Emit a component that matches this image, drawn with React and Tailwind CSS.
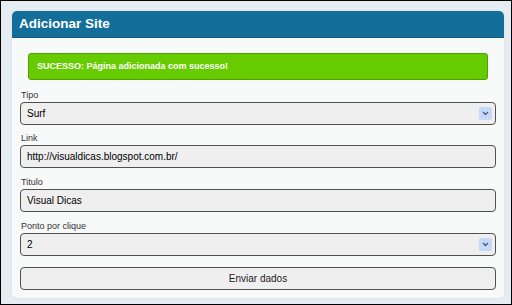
export default function App() {
  return (
    <div className="h-[305px] w-[512px] border border-black bg-[#e5ecf2] pl-[11px] pr-[7px] pt-[10px] font-['Liberation_Sans',Arial,sans-serif]">
      <div className="h-[287px] rounded-[5px] bg-[#f8f9f9] shadow-[0_0_0_1px_#dde6ee]">
        <div className="flex h-[27px] items-center rounded-t-[5px] border-b border-[#0e5f86] bg-[#136f99] px-[7px]">
          <h1 className="text-[13.5px] font-bold text-white">Adicionar Site</h1>
        </div>
        <div className="px-[8px] pt-[15px]">
          <div className="mx-[8px] flex h-[27px] items-center rounded-[3px] border border-[#4fa300] bg-[#66cc00] px-[8px] text-[9px] font-bold text-white">
            SUCESSO: Página adicionada com sucesso!
          </div>
          <Field label="Tipo" value="Surf" select className="mt-[9px]" />
          <Field label="Link" value="http://visualdicas.blogspot.com.br/" className="mt-[7px]" />
          <Field label="Titulo" value="Visual Dicas" className="mt-[8px]" />
          <Field label="Ponto por clique" value="2" select className="mt-[8px]" />
          <button className="mt-[11px] flex h-[23px] w-full items-center justify-center rounded-[4px] border-[1.5px] border-[#505050] bg-[#efefef] text-[10px] text-[#222]">
            Enviar dados
          </button>
        </div>
      </div>
    </div>
  )
}

function Field({ label, value, select, className }) {
  return (
    <div className={className}>
      <p className="pl-[1px] text-[9px] leading-[13px] text-[#333]">{label}</p>
      <div className="flex h-[23px] items-center rounded-[4px] border-[1.5px] border-[#505050] bg-[#efefef] pl-[6px] pr-[3px] text-[10px] text-black">
        <span className="flex-1">{value}</span>
        {select && (
          <span className="flex h-[13px] w-[13px] items-center justify-center rounded-[2px] bg-[#c7d9f8]">
            <svg width="7" height="5" viewBox="0 0 7 5"><path d="M1 1l2.5 2.5L6 1" stroke="#4a5d80" strokeWidth="1.4" fill="none" /></svg>
          </span>
        )}
      </div>
    </div>
  )
}
